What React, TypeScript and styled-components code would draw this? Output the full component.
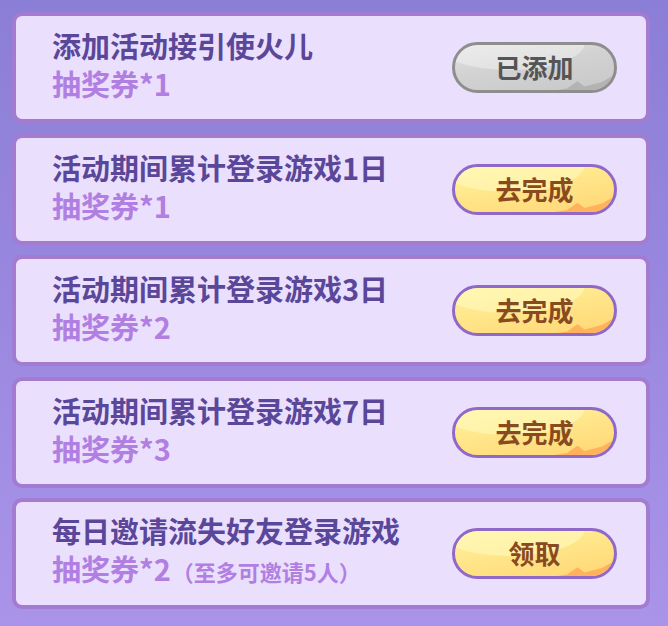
import React from "react";
import styled, { createGlobalStyle, css } from "styled-components";

const Global = createGlobalStyle`
  html, body { margin: 0; padding: 0; }
  body {
    font-family: "Noto Sans CJK SC", "Noto Sans", sans-serif;
    background: linear-gradient(180deg, #8b7ed6 0%, #9a88df 50%, #aa94ea 100%);
    min-height: 626px;
  }
`;

const Page = styled.div`
  width: 668px;
  height: 626px;
  box-sizing: border-box;
  padding: 12px 18px 17px 12px;
  display: flex;
  flex-direction: column;
  gap: 10.5px;
`;

const Card = styled.div`
  box-sizing: border-box;
  height: 111px;
  border: 4px solid #a37bd0;
  border-radius: 10px;
  background: #ebdffe;
  display: flex;
  align-items: center;
  justify-content: space-between;
  padding: 0 29px 0 36px;
`;

const TextBlock = styled.div`
  display: flex;
  flex-direction: column;
  gap: 2px;
  margin-top: -7px;
`;

const Title = styled.div`
  font-size: 29px;
  font-weight: 700;
  line-height: 36px;
  color: #5a4799;
  white-space: nowrap;
`;

const Reward = styled.div`
  font-size: 29px;
  font-weight: 700;
  line-height: 36px;
  color: #b07fe1;
  white-space: nowrap;
  display: flex;
  align-items: baseline;
`;

const Note = styled.span`
  font-size: 22px;
  margin-left: 1px;
`;

const Button = styled.div<{ $done?: boolean }>`
  position: relative;
  overflow: hidden;
  box-sizing: border-box;
  width: 165px;
  height: 51px;
  flex-shrink: 0;
  border-radius: 26px;
  display: flex;
  align-items: center;
  justify-content: center;
  font-size: 26px;
  font-weight: 700;
  ${(p) =>
    p.$done
      ? css`
          border: 3px solid #8e8e8e;
          background: linear-gradient(170deg, #e2e2e2 0%, #d2d2d2 45%, #c8c8c8 100%);
          color: #555555;
          &::before {
            background: rgba(255, 255, 255, 0.35);
          }
          &::after {
            background: #b3b3b3;
          }
        `
      : css`
          border: 3px solid #9069c8;
          background: linear-gradient(170deg, #fff3a0 0%, #ffe68a 45%, #ffd674 100%);
          color: #8a4a1f;
          &::before {
            background: rgba(255, 250, 190, 0.6);
          }
          &::after {
            background: #ffb15c;
          }
        `}
  &::before {
    content: "";
    position: absolute;
    left: -20px;
    top: -30px;
    width: 150px;
    height: 55px;
    border-radius: 50%;
  }
  &::after {
    content: "";
    position: absolute;
    right: -2px;
    bottom: -2px;
    width: 70px;
    height: 18px;
    clip-path: polygon(100% 0, 100% 100%, 0 100%, 30% 80%, 45% 40%, 55% 70%, 80% 45%);
  }
`;

const Label = styled.span`
  position: relative;
  z-index: 1;
  margin-top: -2px;
`;

type Task = { title: string; reward: string; note?: string; action: string; done?: boolean };

const tasks: Task[] = [
  { title: "添加活动接引使火儿", reward: "抽奖券*1", action: "已添加", done: true },
  { title: "活动期间累计登录游戏1日", reward: "抽奖券*1", action: "去完成" },
  { title: "活动期间累计登录游戏3日", reward: "抽奖券*2", action: "去完成" },
  { title: "活动期间累计登录游戏7日", reward: "抽奖券*3", action: "去完成" },
  { title: "每日邀请流失好友登录游戏", reward: "抽奖券*2", note: "（至多可邀请5人）", action: "领取" },
];

export default function App() {
  return (
    <>
      <Global />
      <Page>
        {tasks.map((t, i) => (
          <Card key={i}>
            <TextBlock>
              <Title>{t.title}</Title>
              <Reward>
                {t.reward}
                {t.note && <Note>{t.note}</Note>}
              </Reward>
            </TextBlock>
            <Button $done={t.done}>
              <Label>{t.action}</Label>
            </Button>
          </Card>
        ))}
      </Page>
    </>
  );
}
